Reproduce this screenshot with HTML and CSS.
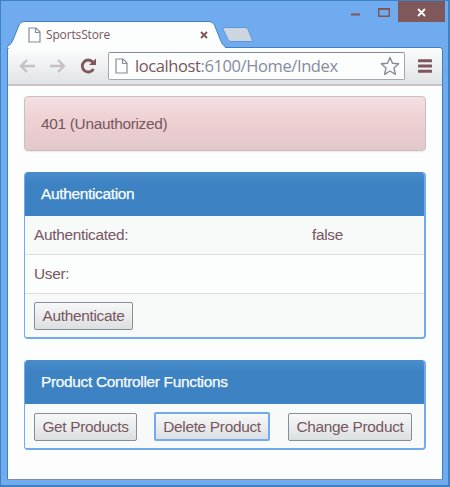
FILE: index.html
```html
<!DOCTYPE html>
<html lang="en">
<head>
<meta charset="utf-8">
<title>SportsStore</title>
<link rel="stylesheet" href="styles.css">
</head>
<body>
<div class="window">
  <header class="titlebar">
    <div class="tab">
      <svg class="tab-shape" width="218" height="27" viewBox="0 0 218 27"><path d="M0 27V25.5Q4 24 6 19L12 4Q13.500 .5 17 .5H202Q206 .5 207.500 4L213 18Q215 24 218 25.500V27Z" fill="#fcfdfd" stroke="#3d83c3"/><path d="M1 26H218V27H1Z" fill="#fcfdfd"/></svg>
      <div class="tab-content">
        <svg class="page-icon" width="13" height="16" viewBox="0 0 13 16"><path d="M1 1H8L12 5V15H1ZM7.500 1V5.500H12" fill="#fcfdfd" stroke="#858c9c" stroke-width="1.200"/></svg>
        <span class="tab-title">SportsStore</span>
        <svg class="tab-close" width="8" height="8" viewBox="0 0 8 8"><path d="M1 1L7 7M7 1L1 7" stroke="#80575b" stroke-width="1.900"/></svg>
      </div>
    </div>
    <svg class="new-tab" width="32" height="16" viewBox="0 0 32 16"><path d="M3 .500H23Q25 .500 26 2.500L30.500 13.500Q31 14.500 29 14.500H9Q7 14.500 6 12.500L1 2Q.500 .500 3 .500Z" fill="#cdd5df" stroke="#5b99da"/></svg>
    <div class="controls">
      <svg width="9" height="3" viewBox="0 0 9 3"><path d="M0 .500H9V2.500H0Z" fill="#80575b"/></svg>
      <svg class="maximize" width="12" height="9" viewBox="0 0 12 9"><path d="M.750 1H11.250V8.250H.750Z" fill="none" stroke="#80575b" stroke-width="1.500"/><path d="M0 1H12" stroke="#80575b" stroke-width="2"/></svg>
      <div class="close"><svg width="9" height="9" viewBox="0 0 9 9"><path d="M1 1L8 8M8 1L1 8" stroke="#fcfdfd" stroke-width="1.800"/></svg></div>
    </div>
  </header>
  <div class="client">
    <nav class="toolbar">
      <svg class="back" width="16" height="14" viewBox="0 0 16 14"><path d="M16 7H2M8 1L2 7L8 13" fill="none" stroke="#c8c0c6" stroke-width="2.400"/></svg>
      <svg class="forward" width="16" height="14" viewBox="0 0 16 14"><path d="M0 7H14M8 1L14 7L8 13" fill="none" stroke="#c8c0c6" stroke-width="2.400"/></svg>
      <svg class="reload" width="17" height="16" viewBox="0 0 17 16"><path d="M12.800 4A6 6 0 1 0 13.500 11" fill="none" stroke="#80575b" stroke-width="2.800"/><path d="M16 .500V7H9Z" fill="#80575b"/></svg>
      <div class="address">
        <svg class="page-icon" width="13" height="16" viewBox="0 0 13 16"><path d="M1 1H8L12 5V15H1ZM7.500 1V5.500H12" fill="#fcfdfd" stroke="#858c9c" stroke-width="1.200"/></svg>
        <span class="url"><b>localhost</b>:6100/Home/Index</span>
        <svg class="star" width="20" height="20" viewBox="0 0 20 20"><path d="M10 1.500L12.500 7.300L18.700 7.800L14 12L15.400 18.300L10 15L4.600 18.300L6 12L1.300 7.800L7.500 7.300Z" fill="#fcfdfd" stroke="#858c9c" stroke-width="1.400" stroke-linejoin="round"/></svg>
      </div>
      <svg class="menu" width="14" height="14" viewBox="0 0 14 14"><path d="M1 1.750H13M1 7H13M1 12.250H13" stroke="#80575b" stroke-width="3" stroke-linecap="round"/></svg>
    </nav>
    <main>
      <div class="alert">401 (Unauthorized)</div>
      <section class="panel">
        <h2 class="heading">Authentication</h2>
        <div class="row striped"><span class="label">Authenticated:</span><span>false</span></div>
        <div class="row"><span class="label">User:</span></div>
        <div class="row action"><button class="authenticate">Authenticate</button></div>
      </section>
      <section class="panel">
        <h2 class="heading">Product Controller Functions</h2>
        <div class="products">
          <button class="get">Get Products</button>
          <button class="delete">Delete Product</button>
          <button class="change">Change Product</button>
        </div>
      </section>
    </main>
  </div>
</div>
</body>
</html>
```

FILE: styles.css
```css
* { box-sizing: border-box; }
body { margin: 0; color: #76575e; font: 15.4px/20px "Liberation Sans", Arial, sans-serif; letter-spacing: -.3px; }
svg { display: block; flex: none; }
.window { width: 450px; height: 487px; padding: 0 6px 5px; border: 1px solid #3d83c3; border-right-width: 2px; border-bottom-width: 2px; background: #70abf0; display: flex; flex-direction: column; }
.titlebar { height: 46px; flex: none; display: flex; align-items: flex-end; }
.tab { width: 218px; height: 27px; display: grid; margin-bottom: -1px; position: relative; z-index: 1; }
.tab-shape, .tab-content { grid-area: 1 / 1; }
.tab-content { display: flex; align-items: center; padding: 0 18px 0 21px; height: 27px; z-index: 1; }
.tab-title { font: 12px/16px "Open Sans", sans-serif; margin-left: 5px; letter-spacing: -.15px; }
.tab-close { margin-left: auto; margin-right: -1px; }
.new-tab { margin: 0 0 4px -3px; }
.controls { display: flex; margin-left: auto; align-self: flex-start; padding-top: 0; margin-right: -3px; }
.controls > svg { margin-top: 12px; margin-right: 18px; }
.controls > .maximize { margin-top: 7px; margin-right: 8px; }
.close { width: 47px; height: 21px; background: #80575b; display: grid; place-items: center; padding-top: 2px; }
.client { flex: 1; border: 1px solid #3d83c3; border-bottom-color: #858c9c; border-radius: 3px 4px 1px 1px; background: #fcfdfd; margin-right: -1px; }
.toolbar { height: 38px; border-bottom: 2px solid #cdc1c5; background: linear-gradient(#fcfdfd, #e0e3e5); display: flex; align-items: center; padding: 0 10px 0 11px; border-radius: 3px 3px 0 0; }
.forward { margin-left: 15px; }
.reload { margin-left: 14px; }
.address { width: 297px; height: 28px; margin-left: 11px; border: 1px solid #a5a7b5; border-top-color: #858c9c; border-radius: 2px; background: #fcfdfd; display: flex; align-items: center; padding: 0 4px 0 6px; }
.url { font: 16.5px/24px "Open Sans", sans-serif; letter-spacing: -.4px; color: #858c9c; margin-left: 7px; white-space: nowrap; }
.url b { font-weight: 400; color: #76575e; }
.star { margin-left: auto; }
.menu { margin-left: auto; }
main { padding: 10px 16px 0; }
.alert { height: 55px; border: 1px solid #c9bfc5; border-radius: 4px; background: linear-gradient(#f3dfe1, #edd0d2 45%, #e2c8cc); padding: 17px 16px; margin-bottom: 21px; box-shadow: 0 1px 1px #f4e6e8; }
.panel { border: 2px solid #70abf0; border-top: 0; border-left-width: 1px; border-radius: 4px; margin-bottom: 21px; overflow: hidden; }
.heading { margin: 0; height: 44px; padding: 12px 16px; background: linear-gradient(#4b8dcc, #3d83c3 25%); color: #fcfdfd; font: inherit; -webkit-text-stroke: .25px #fcfdfd; }
.row { height: 38px; display: flex; align-items: center; padding: 0 9px; background: #fcfdfd; }
.row + .row { border-top: 1px solid #dedde2; height: 39px; }
.row.striped, .row.action, .products { background: #f8f9f9; }
.row + .row.action { height: 44px; }
.label { width: 278px; }
.products { height: 44px; padding: 9px; display: flex; }
button { height: 28px; padding: 0; font: inherit; letter-spacing: inherit; color: #76575e; border: 1px solid #858c9c; border-radius: 2px; background: linear-gradient(#f7f8f8, #dcdfe1); }
.authenticate { width: 99px; }
.get { width: 103px; margin-right: 17px; }
.delete { width: 116px; height: 29px; margin-top: -1px; border: 2px solid #70abf0; margin-right: 18px; }
.change { width: 124px; }
```
